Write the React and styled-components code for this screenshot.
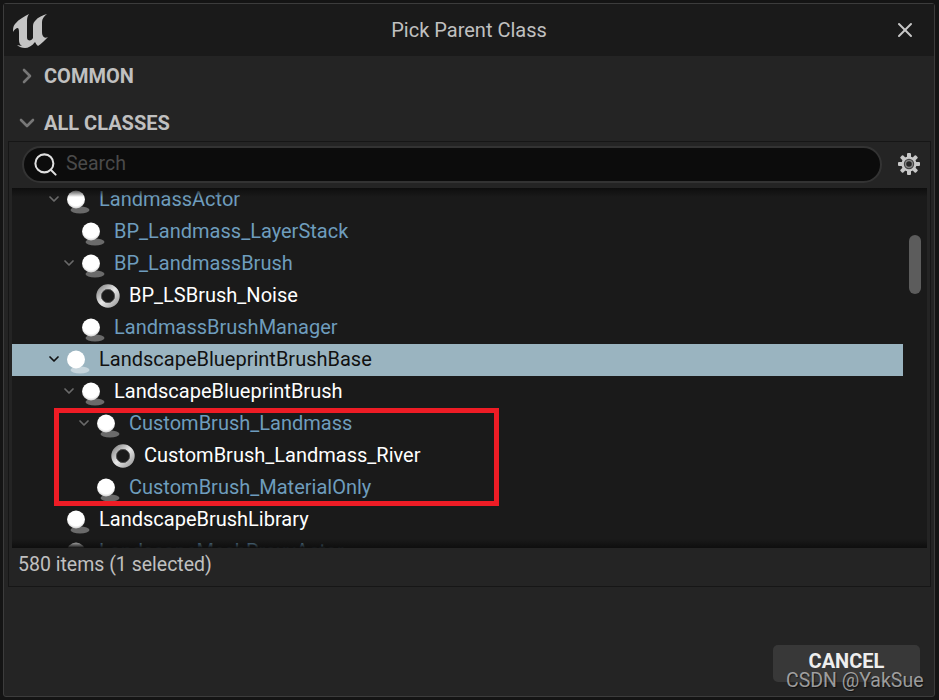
import styled, { createGlobalStyle } from "styled-components";
import { ChevronDown, ChevronRight, Search, X } from "lucide-react";

const rows = [
  { name: "LandmassActor", level: 0, arrow: true, link: true },
  { name: "BP_Landmass_LayerStack", level: 1, link: true },
  { name: "BP_LandmassBrush", level: 1, arrow: true, link: true },
  { name: "BP_LSBrush_Noise", level: 2, ring: true },
  { name: "LandmassBrushManager", level: 1, link: true },
  { name: "LandscapeBlueprintBrushBase", level: 0, arrow: true, selected: true },
  { name: "LandscapeBlueprintBrush", level: 1, arrow: true },
  { name: "CustomBrush_Landmass", level: 2, arrow: true, link: true },
  { name: "CustomBrush_Landmass_River", level: 3, ring: true },
  { name: "CustomBrush_MaterialOnly", level: 2, link: true },
  { name: "LandscapeBrushLibrary", level: 0 },
  { name: "LandscapeMeshProxyActor", level: 0, link: true },
];

const GlobalStyle = createGlobalStyle`
  html, body {
    margin: 0;
    background: #141414;
  }
  * {
    box-sizing: border-box;
  }
`;

const Page = styled.div`
  position: relative;
  width: 939px;
  height: 700px;
  padding: 3px 4px 3px 3px;
  font-family: Roboto, "Liberation Sans", sans-serif;
  overflow: hidden;
`;

const Window = styled.div`
  height: 100%;
  display: flex;
  flex-direction: column;
  background: #242424;
  border: 1px solid #3c3c3c;
  border-radius: 3px;
`;

const TitleBar = styled.div`
  position: relative;
  height: 52px;
  flex: none;
  display: flex;
  align-items: center;
  justify-content: center;
  background: #1a1a1a;
  color: #c0c0c0;
  font-size: 20px;
`;

const Logo = styled.svg`
  position: absolute;
  left: 8px;
  top: 9px;
`;

const CloseButton = styled.div`
  position: absolute;
  right: 17px;
  top: 14px;
  display: flex;
  color: #c8c8c8;
`;

const SectionHeader = styled.div`
  height: ${(p) => p.$height}px;
  flex: none;
  display: flex;
  align-items: flex-start;
  gap: 5px;
  padding: ${(p) => p.$top}px 0 0 11px;
  color: #c0c0c0;
  font-size: 20px;
  font-weight: 700;

  svg {
    color: #777;
    flex: none;
  }
`;

const Panel = styled.div`
  margin: 0 3px 0 4px;
  height: 446px;
  flex: none;
  display: flex;
  flex-direction: column;
  border: 1px solid #161616;
  padding: 0 3px;
`;

const SearchRow = styled.div`
  height: 46px;
  flex: none;
  display: flex;
  align-items: center;
  padding: 0 0 2px 10px;
`;

const SearchBox = styled.div`
  width: 860px;
  height: 37px;
  display: flex;
  align-items: center;
  gap: 7px;
  padding-left: 8px;
  background: #0c0c0c;
  border: 2px solid #333;
  border-radius: 19px;
  color: #e0e0e0;
`;

const Placeholder = styled.span`
  color: #4a4a4a;
  font-size: 19.5px;
  padding-bottom: 2px;
`;

const GearIcon = styled.svg`
  margin-left: 15px;
  flex: none;
`;

const Tree = styled.div`
  position: relative;
  height: 360px;
  flex: none;
  background: #1a1a1a;
  overflow: hidden;

  &::after {
    content: "";
    position: absolute;
    inset: 0;
    pointer-events: none;
    background:
      linear-gradient(#0e0e0e, rgba(14, 14, 14, 0) 9px),
      linear-gradient(0deg, #0e0e0e, rgba(14, 14, 14, 0) 9px);
  }
`;

const RowList = styled.div`
  margin-top: -4px;
  padding-right: 24px;
`;

const Row = styled.div`
  height: 32px;
  display: flex;
  align-items: center;
  padding: 0 0 2px ${(p) => 34 + p.$level * 15}px;
  background: ${(p) => (p.$selected ? "#9ab4c0" : "transparent")};
  color: ${(p) => (p.$selected ? "#111" : p.$link ? "#6e9dbd" : "#fff")};
  font-size: 20px;
  white-space: nowrap;
`;

const ArrowSlot = styled.span`
  width: 16px;
  flex: none;
  display: flex;
  justify-content: center;
  color: ${(p) => (p.$selected ? "#111" : "#6a6a6a")};
`;

const IconSlot = styled.svg`
  flex: none;
  margin: 0 8px 0 3px;
`;

const Scrollbar = styled.div`
  position: absolute;
  left: 897px;
  top: 47px;
  width: 12px;
  height: 59px;
  border-radius: 6px;
  background: #5c5c5c;
`;

const StatusBar = styled.div`
  flex: 1;
  display: flex;
  align-items: center;
  padding: 0 0 5px 6px;
  color: #c0c0c0;
  font-size: 19.5px;
`;

const Footer = styled.div`
  flex: 1;
  display: flex;
  align-items: flex-end;
  justify-content: flex-end;
  padding: 0 14px 14px 0;
`;

const CancelButton = styled.div`
  width: 147px;
  height: 37px;
  display: flex;
  align-items: center;
  justify-content: center;
  background: #383838;
  border-radius: 5px;
  color: #eee;
  font-size: 20px;
  font-weight: 700;
  padding-bottom: 5px;
`;

const Highlight = styled.div`
  position: absolute;
  left: 54px;
  top: 408px;
  width: 445px;
  height: 98px;
  border: 5px solid #ee1c25;
`;

const Watermark = styled.div`
  position: absolute;
  left: 786px;
  top: 669px;
  color: rgba(205, 205, 205, 0.72);
  font-size: 19.5px;
  text-shadow: 1px 1px 1px rgba(0, 0, 0, 0.5);
`;

const ActorIcon = () => (
  <IconSlot width="26" height="32" viewBox="0 0 26 32">
    <defs>
      <radialGradient id="ball" cx="0.5" cy="0.4" r="0.6">
        <stop offset="0.75" stopColor="#fff" />
        <stop offset="1" stopColor="#ccc" />
      </radialGradient>
    </defs>
    <ellipse cx="15" cy="27" rx="9.5" ry="3.5" fill="#6a6a6a" />
    <circle cx="11" cy="16.5" r="9" fill="url(#ball)" />
  </IconSlot>
);

const SelectedActorIcon = () => (
  <IconSlot width="26" height="32" viewBox="0 0 26 32">
    <ellipse cx="15" cy="27" rx="9.5" ry="3.5" fill="#c6d5dc" />
    <circle cx="11" cy="16.5" r="9" fill="#fff" />
  </IconSlot>
);

const RingIcon = () => (
  <IconSlot width="26" height="32" viewBox="0 0 26 32">
    <defs>
      <linearGradient id="ring" x1="0" y1="0" x2="1" y2="1">
        <stop offset="0" stopColor="#8c8c8c" />
        <stop offset="0.5" stopColor="#e8e8e8" />
        <stop offset="1" stopColor="#a0a0a0" />
      </linearGradient>
    </defs>
    <circle cx="13" cy="17" r="9.2" fill="none" stroke="url(#ring)" strokeWidth="5" />
    <circle cx="13" cy="17" r="6.6" fill="none" stroke="#555" strokeWidth="1" />
  </IconSlot>
);

const App = () => {
  return (
    <Page>
      <GlobalStyle />
      <Window>
        <TitleBar>
          <Logo width="40" height="40" viewBox="0 0 40 40">
            <path
              fill="#c4c4c4"
              d="M17 1 C13 3 7 6 3 11 C1 13 1 16 1 19 C2 17 4 15 6 15 C7 16 7 18 7 21 L7 27 C7 30 8 32 10 33 L5 32 C7 34 10 35 13 35 C16 35 20 33 23 29 C24 31 25 32 26 33 C29 31 33 27 36 24 C34 25 32 25 31 23 C30 22 30 20 30 17 L30 9 C30 6 32 3 35 1 C31 2 26 4 23 8 C21 10 21 12 21 14 L21 25 C20 27 18 28 16 27 C15 26 15 25 15 23 L15 9 C15 6 15 4 17 1 Z"
            />
          </Logo>
          Pick Parent Class
          <CloseButton>
            <X size={24} strokeWidth={2} />
          </CloseButton>
        </TitleBar>
        <SectionHeader $height={38} $top={8}>
          <ChevronRight size={24} strokeWidth={2.6} />
          COMMON
        </SectionHeader>
        <SectionHeader $height={47} $top={17}>
          <ChevronDown size={24} strokeWidth={2.6} />
          ALL CLASSES
        </SectionHeader>
        <Panel>
          <SearchRow>
            <SearchBox>
              <Search size={27} strokeWidth={1.8} />
              <Placeholder>Search</Placeholder>
            </SearchBox>
            <GearIcon width="24" height="24" viewBox="0 0 24 24">
              <g fill="#c8c8c8">
                {[0, 45, 90, 135].map((angle) => (
                  <rect key={angle} x="10" y="1" width="4" height="22" rx="1" transform={`rotate(${angle} 12 12)`} />
                ))}
              </g>
              <circle cx="12" cy="12" r="7.6" fill="#c8c8c8" />
              <circle cx="12" cy="12" r="5.2" fill="#444" />
              <circle cx="12" cy="12" r="3.4" fill="#262626" stroke="#8a8a8a" strokeWidth="1.2" />
            </GearIcon>
          </SearchRow>
          <Tree>
            <RowList>
              {rows.map((row) => (
                <Row key={row.name} $level={row.level} $link={row.link} $selected={row.selected}>
                  <ArrowSlot $selected={row.selected}>
                    {row.arrow && <ChevronDown size={24} strokeWidth={2.6} />}
                  </ArrowSlot>
                  {row.ring ? <RingIcon /> : row.selected ? <SelectedActorIcon /> : <ActorIcon />}
                  {row.name}
                </Row>
              ))}
            </RowList>
            <Scrollbar />
          </Tree>
          <StatusBar>580 items (1 selected)</StatusBar>
        </Panel>
        <Footer>
          <CancelButton>CANCEL</CancelButton>
        </Footer>
      </Window>
      <Highlight />
      <Watermark>CSDN @YakSue</Watermark>
    </Page>
  );
};

export default App;
